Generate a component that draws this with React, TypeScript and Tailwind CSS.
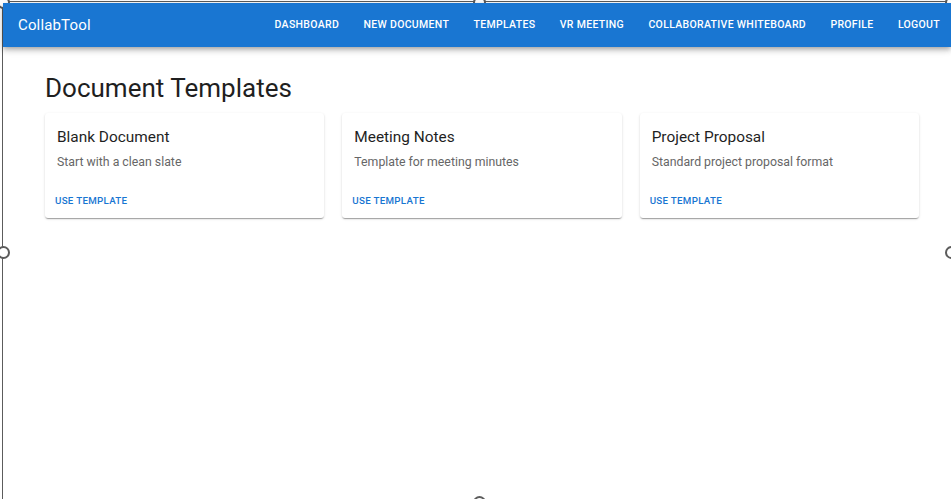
import React from "react";

const navItems = [
  "Dashboard",
  "New Document",
  "Templates",
  "VR Meeting",
  "Collaborative Whiteboard",
  "Profile",
  "Logout",
];

const templates = [
  { name: "Blank Document", description: "Start with a clean slate" },
  { name: "Meeting Notes", description: "Template for meeting minutes" },
  { name: "Project Proposal", description: "Standard project proposal format" },
];

// resize handle of the selection frame that sits on top of the page
function Handle({ className }: { className: string }) {
  return (
    <div
      className={`absolute h-[13px] w-[13px] rounded-full border-2 border-[#5c5c5c] bg-white ${className}`}
    />
  );
}

export default function App() {
  return (
    <div className="relative h-[499px] w-[951px] overflow-hidden bg-white pl-[3px] pt-[3px] font-['Roboto','Liberation_Sans',sans-serif]">
      <header className="relative z-10 flex h-[44px] items-center justify-between bg-[#1976d2] pl-[15px] pr-[11px] text-white shadow-[0_2px_4px_-1px_rgba(0,0,0,0.2),0_4px_5px_0_rgba(0,0,0,0.14),0_1px_10px_0_rgba(0,0,0,0.12)]">
        <div className="text-[15px] leading-none tracking-[0.01em]">CollabTool</div>
        <nav className="flex items-center gap-[24.4px]">
          {navItems.map((item) => (
            <span
              key={item}
              className="text-[10.5px] font-medium uppercase leading-none tracking-[0.03em]"
            >
              {item}
            </span>
          ))}
        </nav>
      </header>

      <main className="pl-[42px] pr-[32px] pt-[25px]">
        <h1 className="mb-[9px] text-[26px] font-normal leading-[1.235] text-[#1f1f1f]">
          Document Templates
        </h1>

        <div className="grid grid-cols-3 gap-[18px]">
          {templates.map((t) => (
            <div
              key={t.name}
              className="rounded-[3px] bg-white shadow-[0_2px_1px_-1px_rgba(0,0,0,0.2),0_1px_1px_0_rgba(0,0,0,0.14),0_1px_3px_0_rgba(0,0,0,0.12)]"
            >
              <div className="px-[12px] pb-[11px] pt-[14px]">
                <div className="mb-[6px] text-[15.4px] leading-[20px] text-[#1f1f1f]">{t.name}</div>
                <div className="text-[12.3px] leading-[18px] text-[#666666]">{t.description}</div>
              </div>
              <div className="flex p-[6px]">
                <button className="rounded-[3px] px-[4px] py-[5.5px] text-[9.75px] font-medium uppercase leading-[13px] tracking-[0.03em] text-[#1976d2]">
                  Use Template
                </button>
              </div>
            </div>
          ))}
        </div>
      </main>

      {/* selection frame drawn over the page */}
      <div className="pointer-events-none absolute left-[2px] top-[1px] h-[1px] w-[949px] bg-[#5c5c5c]" />
      <div className="pointer-events-none absolute left-[2px] top-[1px] h-[498px] w-[1px] bg-[#5c5c5c]" />
      <Handle className="left-[-3px] top-[-4px]" />
      <Handle className="left-[473px] top-[-4px]" />
      <Handle className="left-[945px] top-[-4px]" />
      <Handle className="left-[-3px] top-[246px]" />
      <Handle className="left-[945px] top-[246px]" />
      <Handle className="left-[473px] top-[496px]" />
    </div>
  );
}
